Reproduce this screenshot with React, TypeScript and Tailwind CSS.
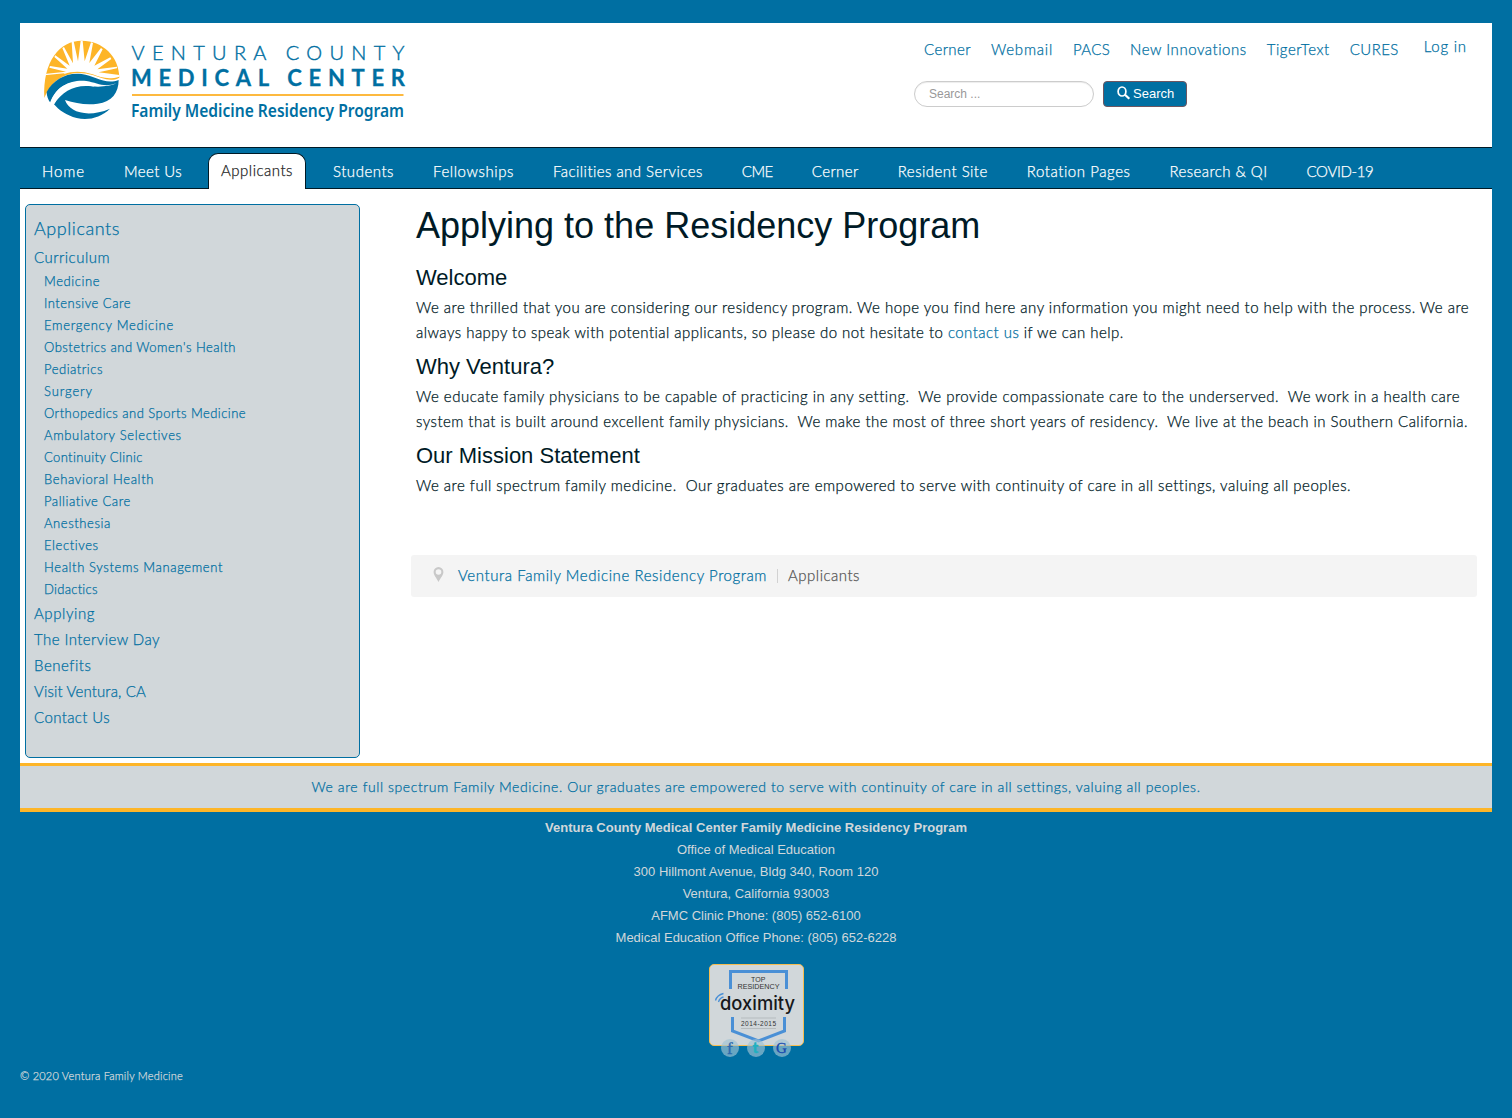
import React, { useLayoutEffect, useRef, useState } from "react";

/** One line of text whose tracking is computed so that it spans `w` pixels. */
function Line({ w, className = "", children }: { w: number; className?: string; children: React.ReactNode }) {
  const ref = useRef<HTMLSpanElement>(null);
  const [spacing, setSpacing] = useState(0);
  useLayoutEffect(() => {
    const el = ref.current;
    if (!el) return;
    el.style.letterSpacing = "0px";
    const natural = el.getBoundingClientRect().width;
    const count = (el.textContent || "").length;
    const next = (w - natural) / count;
    el.style.letterSpacing = next + "px";
    setSpacing(next);
  }, [w]);
  return (
    <span ref={ref} className={"inline-block whitespace-pre [-webkit-text-stroke:0.25px_currentColor] " + className} style={{ letterSpacing: spacing + "px" }}>
      {children}
    </span>
  );
}

type Item = [string, number];

const quickLinks: Item[] = [
  ["Cerner", 47],
  ["Webmail", 62],
  ["PACS", 37],
  ["New Innovations", 117],
  ["TigerText", 63],
  ["CURES", 49],
];

const navItems: Item[] = [
  ["Home", 43],
  ["Meet Us", 58],
  ["Applicants", 73],
  ["Students", 61],
  ["Fellowships", 81],
  ["Facilities and Services", 150],
  ["CME", 31],
  ["Cerner", 47],
  ["Resident Site", 90],
  ["Rotation Pages", 104],
  ["Research & QI", 98],
  ["COVID-19", 67],
];

const curriculum: Item[] = [
  ["Medicine", 56],
  ["Intensive Care", 87],
  ["Emergency Medicine", 130],
  ["Obstetrics and Women's Health", 192],
  ["Pediatrics", 59],
  ["Surgery", 49],
  ["Orthopedics and Sports Medicine", 202],
  ["Ambulatory Selectives", 138],
  ["Continuity Clinic", 99],
  ["Behavioral Health", 110],
  ["Palliative Care", 87],
  ["Anesthesia", 67],
  ["Electives", 55],
  ["Health Systems Management", 179],
  ["Didactics", 54],
];

const sideLinks: Item[] = [
  ["Applying", 61],
  ["The Interview Day", 126],
  ["Benefits", 57],
  ["Visit Ventura, CA", 112],
  ["Contact Us", 76],
];

const address = [
  "Office of Medical Education",
  "300 Hillmont Avenue, Bldg 340, Room 120",
  "Ventura, California 93003",
  "AFMC Clinic Phone: (805) 652-6100",
  "Medical Education Office Phone: (805) 652-6228",
];

function Logo() {
  return (
    <svg width="410" height="90" viewBox="40 36 410 90" className="block" role="img" aria-label="Ventura County Medical Center">
      <g transform="translate(36 34) scale(.3333)">
        <path d="M25 192C20 80 72 20 137 20C200 20 250 68 250 131C222 146 196 131 170 123C115 106 52 122 25 192Z" fill="#fdb528" />
        <path
          d="M85 118L25 124V120L90 113L40 101L42 96L94 104L55 69L58 64L101 95L79 42L84 39L111 88L107 24L113 22L126 82L134 20H140L146 82L165 25L171 27L160 87L195 42L200 46L175 95L223 70L226 75L184 106L243 98V103L188 115L250 123V128C215 139 194 129 170 121C135 110 108 112 85 120Z"
          fill="#fff"
        />
        <path d="M32 174C52 137 92 114 137 120C177 126 207 153 248 138C248 176 228 204 185 209C151 214 119 208 87 198C98 232 151 254 222 224C194 251 157 260 122 252C92 245 68 228 54 211C78 166 122 146 176 158C142 137 98 140 69 164C57 175 50 190 43 206C36 197 32 184 32 174Z" fill="#006fa2" />
        <path d="M54 211C78 171 120 150 167 157C196 160 223 156 242 148C202 162 184 146 151 141C108 136 61 154 42 206Z" fill="#fff" />
      </g>
      <g fill="#006fa2" fontFamily="Lato, sans-serif">
        <text x="131.500" y="59.500" fontSize="20" fontWeight="300" stroke="#006fa2" strokeWidth=".4" textLength="273">VENTURA COUNTY</text>
        <text x="131" y="86" fontSize="22" fontWeight="700" stroke="#006fa2" strokeWidth=".3" textLength="274">MEDICAL CENTER</text>
        <text x="131" y="117" fontSize="17.500" fontWeight="600" fontFamily="Noto Sans, sans-serif" textLength="273" lengthAdjust="spacingAndGlyphs">
          Family Medicine Residency Program
        </text>
      </g>
      <rect x="132" y="94" width="271.500" height="2" fill="#fdb93f" />
    </svg>
  );
}

function Doximity() {
  return (
    <svg width="95" height="82" viewBox="0 0 95 82" className="block" role="img" aria-label="Doximity">
      <path d="M21.500 25V7.500H77.500V25" fill="none" stroke="#4a90d6" strokeWidth="3" />
      <path d="M23.500 53V67L49.500 77L75.500 67V53" fill="none" stroke="#4a90d6" strokeWidth="3" />
      <g fontFamily="Liberation Sans, sans-serif" fill="#333">
        <text x="42" y="17.500" fontSize="7" textLength="14.500">TOP</text>
        <text x="28.500" y="24.500" fontSize="7" textLength="42" lengthAdjust="spacingAndGlyphs">RESIDENCY</text>
        <text x="32" y="62" fontSize="6.500" textLength="35">2014-2015</text>
      </g>
      <path d="M32 54H67M32 64.500H67" stroke="#aab0b2" strokeWidth=".7" />
      <text x="11" y="45.500" fontSize="18.500" fontWeight="500" fontFamily="Inter, sans-serif" fill="#16181b" textLength="75" lengthAdjust="spacingAndGlyphs">
        doximity
      </text>
      <path d="M6.500 36.500Q8 31 14.500 29.500M9.500 38Q10.500 34 14.500 33" fill="none" stroke="#4a90d6" strokeWidth="1.300" />
    </svg>
  );
}

function Social({ children }: { children: React.ReactNode }) {
  return (
    <svg width="18" height="18" viewBox="0 0 18 18" className="block overflow-visible">
      <circle cx="9" cy="9" r="9" fill="#9fc3d4" fillOpacity=".65" />
      {children}
    </svg>
  );
}

export default function App() {
  return (
    <div className="h-[1118px] w-[1512px] bg-[#006fa2] px-5 pt-[23px] font-[Lato,sans-serif] text-[15px] font-light text-[#001a26]">
      <header className="flex h-[124px] bg-white text-[#006fa2]">
        <div className="w-[894px] pl-5 pt-[13px]">
          <Logo />
        </div>
        <div>
          <div className="flex gap-5 pl-[10px] pt-4 leading-5">
            {quickLinks.map(([label, w]) => (
              <a key={label} className="shrink-0">
                <Line w={w}>{label}</Line>
              </a>
            ))}
            <a className="-mt-[3px] ml-[5px]">
              <Line w={43}>Log in</Line>
            </a>
          </div>
          <div className="mt-[22px] flex gap-[9px] font-['Liberation_Sans',Arial,sans-serif]">
            <input
              placeholder="Search ..."
              className="h-[26px] w-[180px] rounded-full border border-[#ccc] px-[14px] text-[12px] shadow-[inset_0_1px_1px_rgba(0,0,0,0.075)] placeholder:text-[#999]"
            />
            <button className="flex h-[26px] w-[84px] items-center rounded-[4px] border border-[#6f5660] bg-[#006fa2] pl-[13px] text-[13px] text-white">
              <svg width="14" height="14" viewBox="0 0 14 14" fill="none" stroke="currentColor" className="-mt-[3px] mr-[2px]">
                <ellipse cx="5" cy="5.500" rx="3.900" ry="4.500" strokeWidth="1.700" />
                <path d="M8 8.700L12.300 12.800" strokeWidth="2.200" />
              </svg>
              Search
            </button>
          </div>
        </div>
      </header>

      <nav className="flex h-[42px] gap-[39px] border-y border-[#001a26] pl-[22px] leading-5 text-white">
        {navItems.map(([label, w]) =>
          label === "Applicants" ? (
            <a key={label} className="-ml-[13px] -mr-3 mt-[5px] h-9 w-[98px] shrink-0 rounded-t-[10px] border border-b-0 border-[#001a26] bg-white px-3 pt-[6px] text-[#222]">
              <Line w={72}>{label}</Line>
            </a>
          ) : (
            <a key={label} className="shrink-0 pt-[13px]">
              <Line w={w}>{label}</Line>
            </a>
          ),
        )}
      </nav>

      <div className="flex h-[574px] bg-white pl-[5px] pt-[15px]">
        <aside className="h-[554px] w-[335px] rounded-[5px] border border-[#006fa2] bg-[#d1d7da] px-2 pt-[11px] text-[#006fa2]">
          <h3 className="h-[29px] text-[18px] leading-[25px]">
            <Line w={86}>Applicants</Line>
          </h3>
          <div className="h-[25px] leading-[25px]">
            <Line w={76}>Curriculum</Line>
          </div>
          <ul className="pl-[10px] text-[13px] leading-[22px]">
            {curriculum.map(([label, w]) => (
              <li key={label} className="h-[22px]">
                <Line w={w}>{label}</Line>
              </li>
            ))}
          </ul>
          <ul className="leading-[26px]">
            {sideLinks.map(([label, w]) => (
              <li key={label} className="h-[26px]">
                <Line w={w}>{label}</Line>
              </li>
            ))}
          </ul>
        </aside>

        <main className="ml-[51px] w-[1066px]">
          <div className="h-[351px] pl-[5px] leading-[25px]">
            <h1 className="h-[58px] font-['Liberation_Sans',Arial,sans-serif] text-[36px] leading-[43px]">
              Applying to the Residency Program
            </h1>
            <h2 className="h-[33px] font-['Liberation_Sans',Arial,sans-serif] text-[22px] leading-[32px]">Welcome</h2>
            <p className="h-[56px]">
              <Line w={1053} className="block w-max">
                We are thrilled that you are considering our residency program. We hope you find here any information you might need to help with the process. We are
              </Line>
              <Line w={708} className="block w-max">
                always happy to speak with potential applicants, so please do not hesitate to <a className="text-[#006fa2] [-webkit-text-stroke-color:#006fa2]">contact us</a> if we can help.
              </Line>
            </p>
            <h2 className="h-[33px] font-['Liberation_Sans',Arial,sans-serif] text-[22px] leading-[32px]">Why Ventura?</h2>
            <p className="h-[56px]">
              <Line w={1044} className="block w-max">
                {"We educate family physicians to be capable of practicing in any setting.  We provide compassionate care to the underserved.  We work in a health care"}
              </Line>
              <Line w={1052} className="block w-max">
                {"system that is built around excellent family physicians.  We make the most of three short years of residency.  We live at the beach in Southern California."}
              </Line>
            </p>
            <h2 className="h-[33px] font-['Liberation_Sans',Arial,sans-serif] text-[22px] leading-[32px]">Our Mission Statement</h2>
            <p>
              <Line w={935} className="block w-max">
                {"We are full spectrum family medicine.  Our graduates are empowered to serve with continuity of care in all settings, valuing all peoples."}
              </Line>
            </p>
          </div>
          <div className="flex h-[42px] items-center rounded-[3px] bg-[#f4f4f4] pl-[22px]">
            <svg width="11" height="15" viewBox="0 0 11 15" className="-mt-1 mr-[14px]">
              <path d="M5.500 0A5 5 0 0 0 .6 5C.6 8 3.500 11 5.500 15C7.500 11 10.400 8 10.400 5A5 5 0 0 0 5.500 0ZM5.500 2.200A2.800 2.800 0 1 1 5.500 7.800A2.800 2.800 0 0 1 5.500 2.200Z" fill="#c8c8c8" fillRule="evenodd" />
            </svg>
            <a className="-mt-px text-[#006fa2]">
              <Line w={309}>Ventura Family Medicine Residency Program</Line>
            </a>
            <span className="ml-[10px] mr-[10px] h-[14px] w-px bg-[#d2d2d2]" />
            <span className="-mt-px text-[#555]">
              <Line w={72}>Applicants</Line>
            </span>
          </div>
        </main>
      </div>

      <div className="h-[49px] border-b-4 border-t-[3px] border-[#fdb528] bg-[#d1d7da] text-center text-[14px] leading-[42px] text-[#006fa2]">
        <Line w={889}>We are full spectrum Family Medicine. Our graduates are empowered to serve with continuity of care in all settings, valuing all peoples.</Line>
      </div>

      <footer className="flex flex-col items-center font-['Liberation_Sans',Arial,sans-serif] text-[13px] leading-[22px] text-[#d1d7da]">
        <p className="mt-[5px] font-bold">Ventura County Medical Center Family Medicine Residency Program</p>
        {address.map((row) => (
          <p key={row}>{row}</p>
        ))}
        <div className="relative mt-[15px] h-[82px] w-[95px] rounded-[5px] border border-[#f6bd50] bg-[#d1d7da]">
          <div className="-ml-px -mt-px">
            <Doximity />
          </div>
          <div className="absolute left-[11px] top-[74px] flex gap-2">
            <Social>
              <text x="6" y="14.500" fontSize="17" fontFamily="Liberation Serif, serif" fill="#2d6aae" stroke="#2d6aae" strokeWidth=".4">f</text>
            </Social>
            <Social>
              <text x="5.500" y="14" fontSize="15" fontWeight="900" fontFamily="Lato, sans-serif" fill="#1fb0c0" stroke="#1fb0c0" strokeWidth=".4">t</text>
            </Social>
            <Social>
              <text x="3" y="14" fontSize="15" fontFamily="Liberation Serif, serif" fill="#1748ae" stroke="#1748ae" strokeWidth=".3">G</text>
            </Social>
          </div>
        </div>
        <p className="mt-[19px] self-start font-[Lato,sans-serif] text-[11px]">
          <Line w={163}>© 2020 Ventura Family Medicine</Line>
        </p>
      </footer>
    </div>
  );
}
